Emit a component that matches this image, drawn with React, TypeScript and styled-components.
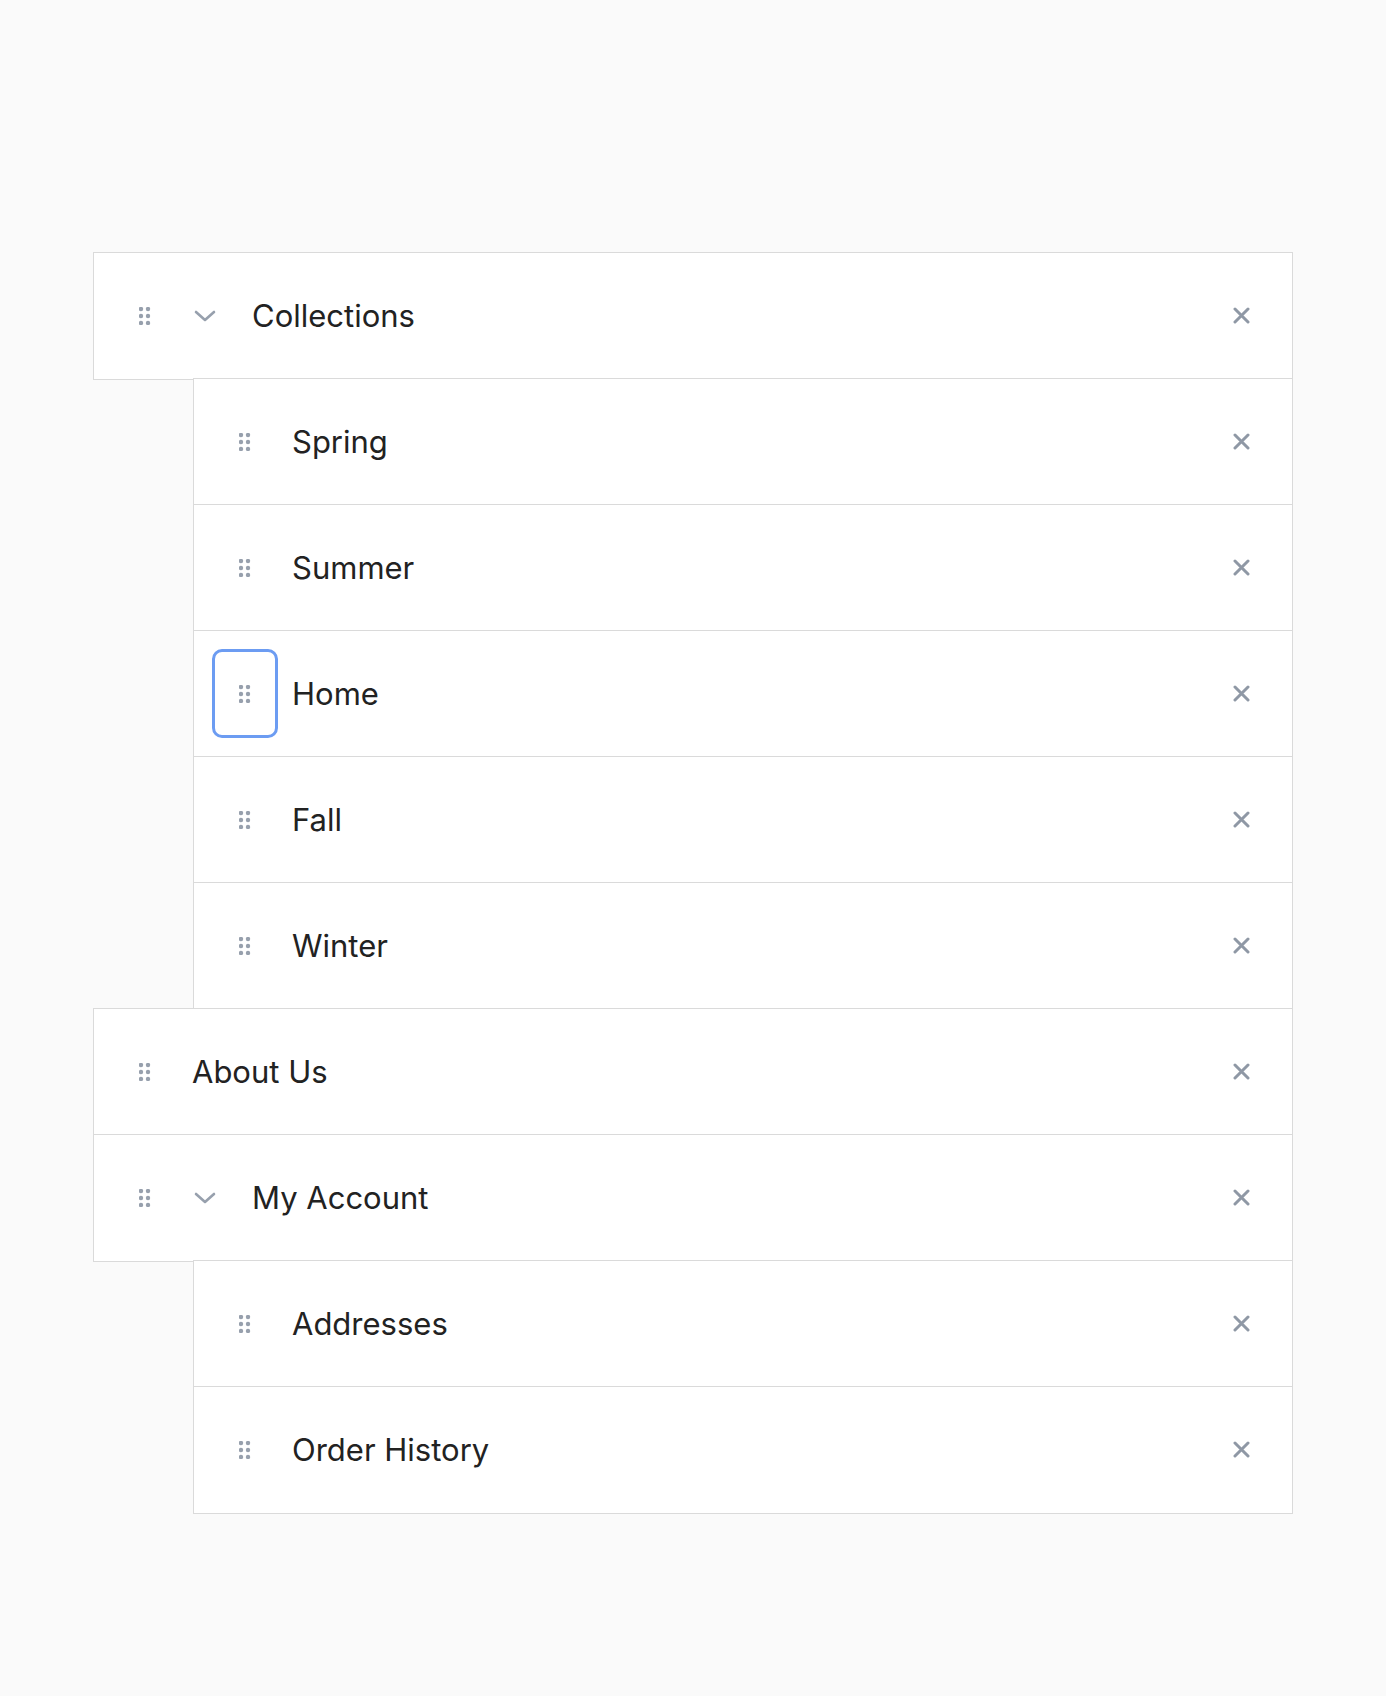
import React from "react";
import styled, { createGlobalStyle } from "styled-components";

const Global = createGlobalStyle`
  body { margin: 0; background: #fafafa; font-family: Inter, "Noto Sans", sans-serif; }
`;

type Item = { label: string; children?: string[] };

const data: Item[] = [
  { label: "Collections", children: ["Spring", "Summer", "Home", "Fall", "Winter"] },
  { label: "About Us" },
  { label: "My Account", children: ["Addresses", "Order History"] },
];

const Handle = ({ focused }: { focused?: boolean }) => (
  <HandleButton $focused={focused}>
    <svg width="12" height="18" viewBox="0 0 12 18">
      {[0, 1, 2].map((r) =>
        [0, 1].map((c) => (
          <circle key={`${r}${c}`} cx={2 + c * 7} cy={2 + r * 7} r="2.2" fill="#97a0ad" />
        ))
      )}
    </svg>
  </HandleButton>
);

const CloseIcon = () => (
  <Close>
    <svg width="17" height="17" viewBox="0 0 17 17">
      <path d="M2 2l13 13M15 2L2 15" stroke="#8f98a5" strokeWidth="3" strokeLinecap="round" />
    </svg>
  </Close>
);

const App: React.FC = () => {
  return (
    <Page>
      <Global />
      <List>
        {data.map((item) => (
          <React.Fragment key={item.label}>
            <Row>
              <Handle />
              {item.children && (
                <Toggle>
                  <svg width="22" height="12" viewBox="0 0 22 12">
                    <path d="M2 2l9 8 9-8" fill="none" stroke="#97a0ad" strokeWidth="2.6" strokeLinecap="round" strokeLinejoin="round" />
                  </svg>
                </Toggle>
              )}
              <Label $toggle={!!item.children}>{item.label}</Label>
              <CloseIcon />
            </Row>
            {item.children?.map((child) => (
              <Row key={child} $nested>
                <Handle focused={child === "Home"} />
                <Label>{child}</Label>
                <CloseIcon />
              </Row>
            ))}
          </React.Fragment>
        ))}
      </List>
    </Page>
  );
};

export default App;

const Page = styled.div`
  min-height: 1696px;
  padding: 252px 93px 0 93px;
  box-sizing: border-box;
  width: 1386px;
`;

const List = styled.div`
  width: 1200px;
  display: flex;
  flex-direction: column;
`;

const Row = styled.div<{ $nested?: boolean }>`
  display: flex;
  align-items: center;
  height: 127.5px;
  box-sizing: border-box;
  background: #fff;
  border: 1.5px solid #dadada;
  margin-top: -1.5px;
  margin-left: ${(p) => (p.$nested ? "100px" : "0")};
  padding: 0 31px 0 18px;
  &:first-child { margin-top: 0; }
`;

const HandleButton = styled.div<{ $focused?: boolean }>`
  width: 66px;
  height: 89px;
  box-sizing: border-box;
  display: flex;
  align-items: center;
  justify-content: center;
  border-radius: 10px;
  border: 3px solid ${(p) => (p.$focused ? "#6c9cf2" : "transparent")};
`;

const Toggle = styled.div`
  width: 54px;
  display: flex;
  justify-content: center;
`;

const Label = styled.span<{ $toggle?: boolean }>`
  flex: 1;
  margin-left: ${(p) => (p.$toggle ? "20px" : "14px")};
  font-size: 31px;
  color: #222;
`;

const Close = styled.div`
  width: 40px;
  display: flex;
  justify-content: center;
`;
